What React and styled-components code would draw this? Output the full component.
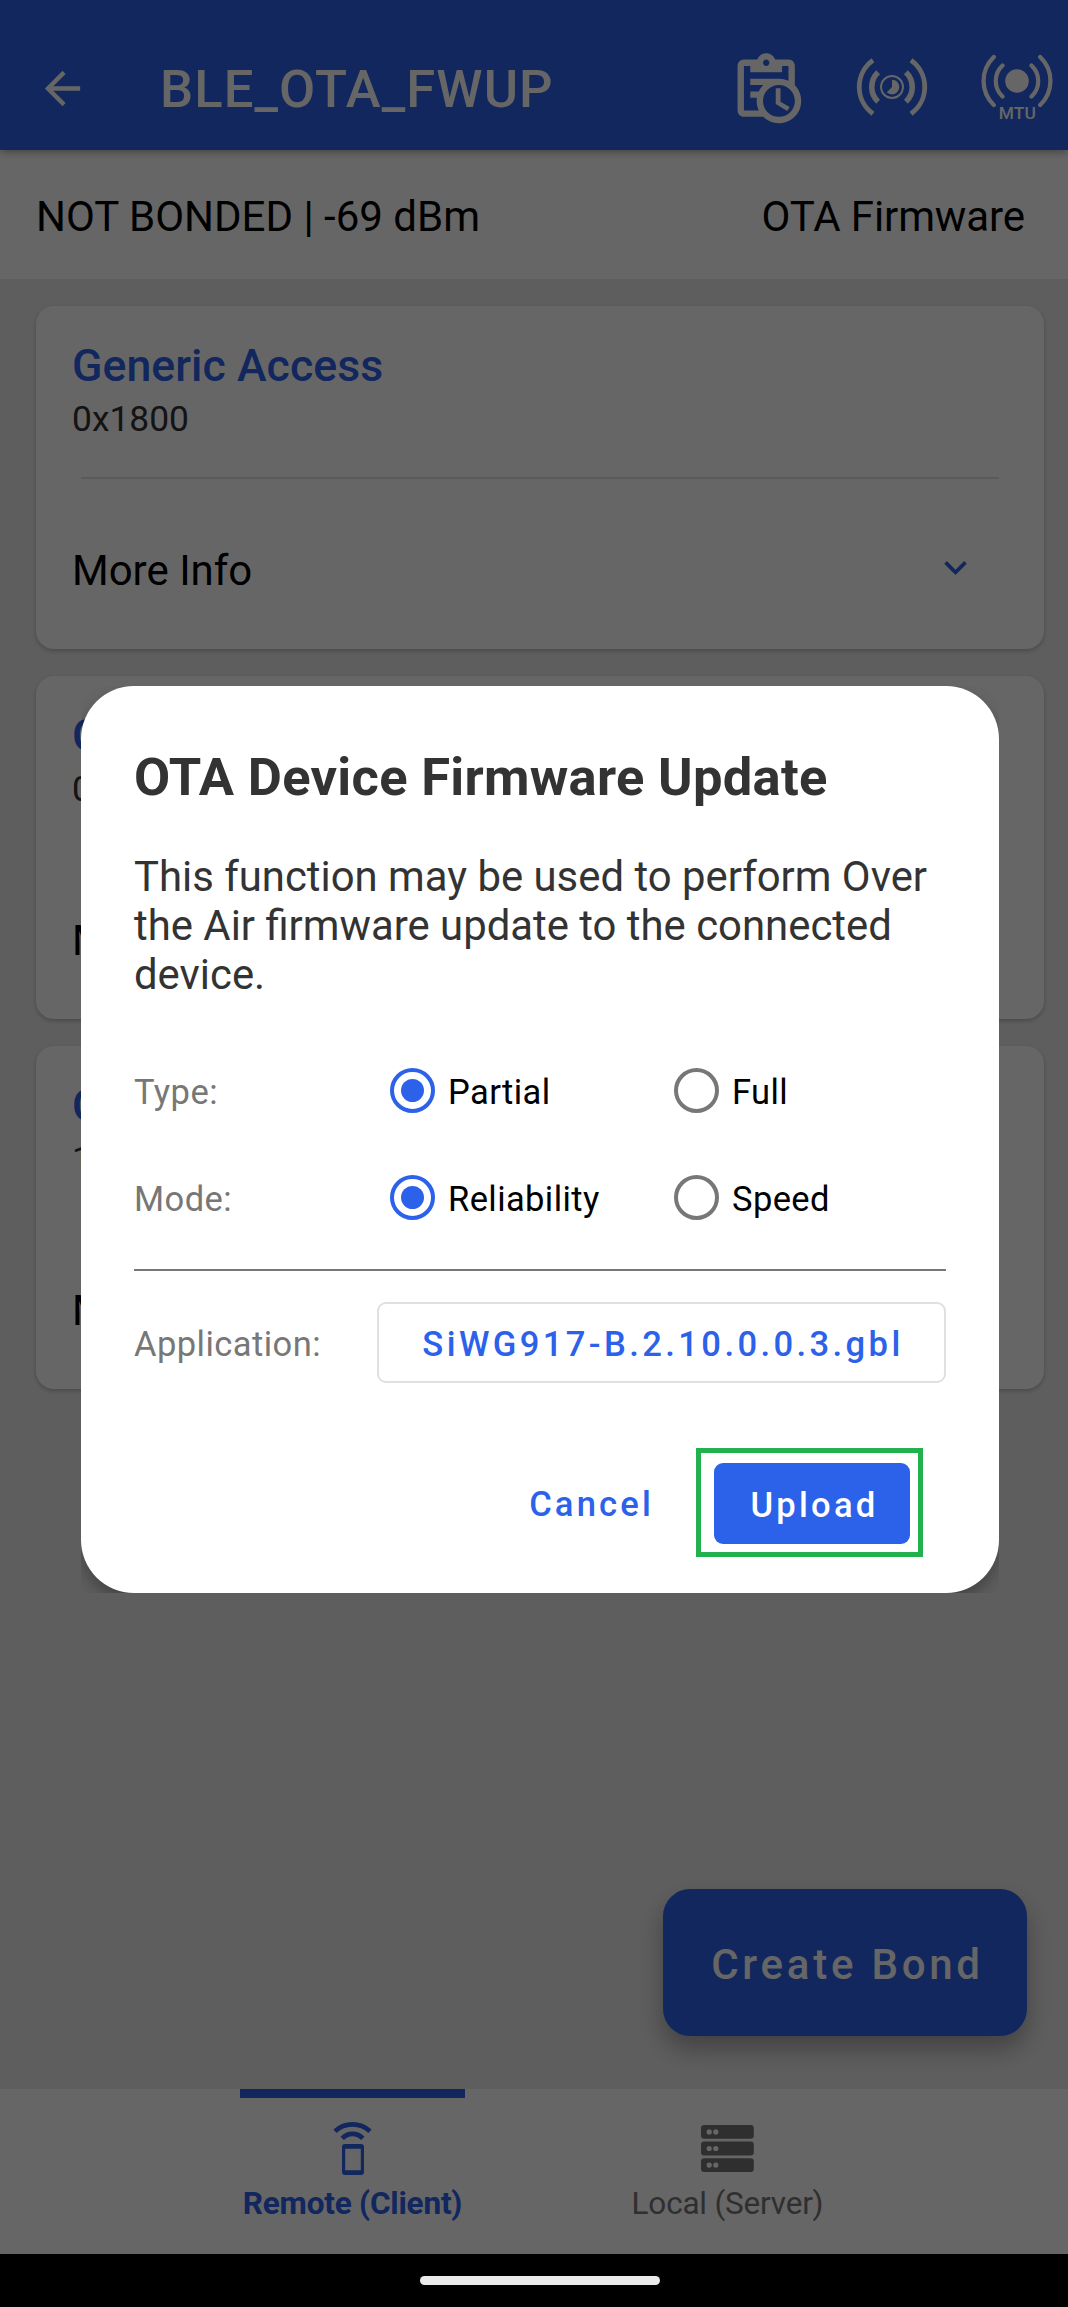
import React from "react";
import styled, { createGlobalStyle } from "styled-components";

const Global = createGlobalStyle`
  *, *::before, *::after { box-sizing: border-box; }
  body { margin: 0; background: #000; }
  body, button { font-family: Roboto, "Liberation Sans", sans-serif; }
  button { border: 0; padding: 0; background: none; }
`;

const Screen = styled.div`
  position: relative;
  width: 1068px;
  height: 2307px;
  display: flex;
  flex-direction: column;
  overflow: hidden;
  background: #ebebeb;
`;

const AppBar = styled.header`
  flex: none;
  height: 150px;
  padding: 26px 14px 0 36px;
  display: flex;
  align-items: center;
  background: #2c61ea;
  color: #fff;
  box-shadow: 0 2px 8px rgba(0, 0, 0, 0.35);
  z-index: 1;
`;

const AppTitle = styled.h1`
  flex: 1;
  margin: 2px 0 0 71px;
  font-size: 52.5px;
  line-height: 62px;
  font-weight: 500;
  letter-spacing: 1.1px;
`;

const Actions = styled.div`
  display: flex;
  align-items: center;
`;

const Action = styled.button`
  width: ${(p) => p.$width}px;
  height: 78px;
  margin-left: ${(p) => p.$gap || 0}px;
  color: inherit;
  svg { display: block; }
`;

const StatusRow = styled.div`
  flex: none;
  height: 129px;
  padding: 3px 43px 0 36px;
  display: flex;
  align-items: center;
  justify-content: space-between;
  background: #fff;
  font-size: 42px;
  line-height: 49px;
  color: #000;
`;

const Mode = styled.span`
  letter-spacing: -0.1px;
`;

const List = styled.main`
  flex: 1;
  padding: 27px 24px 0 36px;
  display: flex;
  flex-direction: column;
  gap: 27px;
`;

const Card = styled.section`
  flex: none;
  height: 343px;
  padding: 34px 45px 0 36px;
  border-radius: 18px;
  background: #fff;
  box-shadow: 0 2px 4px rgba(0, 0, 0, 0.22);
`;

const CardTitle = styled.h2`
  margin: 0;
  font-size: 44.6px;
  line-height: 52px;
  font-weight: 500;
  letter-spacing: 0.06px;
  color: #2c61ea;
`;

const CardCode = styled.div`
  margin-top: 7px;
  font-size: 35.4px;
  line-height: 40px;
  color: #333;
`;

const CardRule = styled.div`
  height: 2px;
  margin: 38px 0 0 9px;
  background: #e0e0e0;
`;

const MoreInfo = styled.div`
  height: 100px;
  margin-top: 41px;
  padding-right: 21px;
  display: flex;
  align-items: center;
  justify-content: space-between;
  font-size: 42px;
  color: #000;
  svg { margin-top: -6px; }
`;

const Fab = styled.button`
  position: absolute;
  left: 663px;
  top: 1889px;
  width: 364px;
  height: 147px;
  padding: 3px 0 0 5px;
  border-radius: 27px;
  background: #2c61ea;
  color: #fff;
  font-size: 42px;
  font-weight: 500;
  letter-spacing: 3.75px;
  box-shadow: 0 13px 24px rgba(0, 0, 0, 0.3);
`;

const Tabs = styled.nav`
  flex: none;
  height: 165px;
  padding: 0 153px 0 165px;
  display: flex;
  background: #fff;
`;

const Tab = styled.div`
  flex: 1;
  display: flex;
  flex-direction: column;
  align-items: center;
  font-size: 31.5px;
  line-height: 38px;
  letter-spacing: -0.2px;
  font-weight: ${(p) => (p.$active ? 700 : 400)};
  color: ${(p) => (p.$active ? "#2c61ea" : "#777")};
  svg { display: block; margin: 20px 0 4px; }
  &::before {
    content: "";
    width: 225px;
    height: 9px;
    background: ${(p) => (p.$active ? "#2c61ea" : "transparent")};
  }
`;

const SystemBar = styled.footer`
  flex: none;
  height: 53px;
  padding-left: 12px;
  display: flex;
  justify-content: center;
  align-items: center;
  background: #000;
`;

const HomeHandle = styled.div`
  width: 240px;
  height: 9px;
  border-radius: 5px;
  background: #ebebeb;
`;

const Scrim = styled.div`
  position: absolute;
  inset: 0 0 53px;
  z-index: 2;
  padding: 686px 69px 0 81px;
  background: rgba(0, 0, 0, 0.6);
`;

const DialogWindow = styled.div`
  height: 907px;
  overflow: hidden;
`;

const Dialog = styled.div`
  height: 907px;
  padding: 60px 53px 0;
  border-radius: 53px;
  background: #fff;
  box-shadow: 0 8px 16px rgba(0, 0, 0, 0.28);
`;

const DialogTitle = styled.h2`
  margin: 0;
  font-size: 52.5px;
  line-height: 62px;
  font-weight: 700;
  letter-spacing: 0.29px;
  color: #333;
`;

const DialogText = styled.p`
  margin: 44px 0 0;
  font-size: 41.87px;
  line-height: 49px;
  color: #333;
`;

const Options = styled.div`
  margin-top: 38px;
`;

const OptionRow = styled.div`
  height: 107px;
  display: grid;
  grid-template-columns: 256px 284px 1fr;
  align-items: center;
`;

const Label = styled.span`
  padding-top: 2px;
  font-size: 34.5px;
  letter-spacing: 0.45px;
  color: #777;
`;

const Choice = styled.label`
  display: flex;
  align-items: center;
  gap: 13px;
  font-size: 34.5px;
  letter-spacing: 0.4px;
  color: #000;
`;

const ChoiceText = styled.span`
  padding-top: 2px;
`;

const Radio = styled.span`
  width: 45px;
  height: 45px;
  display: grid;
  place-items: center;
  border: 4.4px solid ${(p) => (p.$on ? "#2c61ea" : "#777")};
  border-radius: 50%;
  &::after {
    content: "";
    width: 23px;
    height: 23px;
    border-radius: 50%;
    background: ${(p) => (p.$on ? "#2c61ea" : "transparent")};
  }
`;

const Rule = styled.div`
  height: 2px;
  margin-top: 18px;
  background: #777;
`;

const FileRow = styled.div`
  margin-top: 31px;
  display: flex;
  align-items: center;
  justify-content: space-between;
`;

const FileButton = styled.button`
  width: 569px;
  height: 81px;
  padding: 2px 0 0 3px;
  border: 2px solid #e0e0e0;
  border-radius: 9px;
  color: #2c61ea;
  font-size: 34.6px;
  font-weight: 500;
  letter-spacing: 3.4px;
`;

const Buttons = styled.div`
  margin-top: 65px;
  padding-right: 23px;
  display: flex;
  justify-content: flex-end;
  align-items: center;
`;

const CancelButton = styled.button`
  width: 196px;
  height: 81px;
  margin-right: 9px;
  padding: 2px 0 0 5px;
  color: #2c61ea;
  font-size: 34.6px;
  font-weight: 500;
  letter-spacing: 3.15px;
`;

const Highlight = styled.div`
  width: 227px;
  height: 109px;
  padding: 10px 8px 8px 13px;
  border: 5px solid #22b14c;
`;

const UploadButton = styled.button`
  width: 196px;
  height: 81px;
  padding: 2px 0 0 5px;
  border-radius: 9px;
  background: #2c61ea;
  color: #fff;
  font-size: 34.6px;
  font-weight: 500;
  letter-spacing: 3.25px;
`;

const BackIcon = () => (
  <svg width="53" height="53" viewBox="0 0 24 24" fill="currentColor">
    <path d="M20 11H7.83l5.59-5.59L12 4l-8 8 8 8 1.41-1.41L7.83 13H20v-2z" />
  </svg>
);

const LogIcon = () => (
  <svg width="76.4" height="76.4" viewBox="0 0 24 24" fill="currentColor">
    <path d="M21 11.11V5C21 3.9 20.11 3 19 3H14.82C14.4 1.84 13.3 1 12 1S9.6 1.84 9.18 3H5C3.9 3 3 3.9 3 5V19C3 20.11 3.9 21 5 21H11.11C12.37 22.24 14.09 23 16 23C19.87 23 23 19.87 23 16C23 14.09 22.24 12.37 21 11.11M12 3C12.55 3 13 3.45 13 4S12.55 5 12 5 11 4.55 11 4 11.45 3 12 3M5 19V5H7V7H17V5H19V9.68C18.09 9.25 17.08 9 16 9H7V11H11.1C10.5 11.57 10.04 12.25 9.68 13H7V15H9.08C9.03 15.33 9 15.66 9 16C9 17.08 9.25 18.09 9.68 19H5M16 21C13.24 21 11 18.76 11 16S13.24 11 16 11 21 13.24 21 16 18.76 21 16 21M16.5 16.25L19.36 17.94L18.61 19.16L15 17V12H16.5V16.25Z" />
  </svg>
);

const IntervalIcon = () => (
  <svg width="72" height="78" viewBox="-36 -38 72 78" fill="none" stroke="currentColor">
    <path d="M-19 -26.7A32.8 32.8 0 0 0 -19 26.7M19 -26.7A32.8 32.8 0 0 1 19 26.7" strokeWidth="4.8" />
    <path d="M-13.9 -14.7A20.2 20.2 0 0 0 -13.9 14.7M13.9 -14.7A20.2 20.2 0 0 1 13.9 14.7" strokeWidth="5.6" />
    <circle r="11" strokeWidth="1.9" />
    <path d="M0 -7.3A7.3 7.3 0 1 1 -5.2 5.2L0 0Z" fill="currentColor" stroke="none" />
  </svg>
);

const MtuIcon = () => (
  <svg width="74" height="78" viewBox="-37 -32 74 78" fill="none" stroke="currentColor" strokeLinecap="round">
    <path d="M-23.2 -24A33.3 33.3 0 0 0 -23.2 24M23.2 -24A33.3 33.3 0 0 1 23.2 24" strokeWidth="4.3" />
    <path d="M-14.5 -15.5A21.2 21.2 0 0 0 -14.5 15.5M14.5 -15.5A21.2 21.2 0 0 1 14.5 15.5" strokeWidth="4.2" />
    <circle r="11.8" fill="currentColor" stroke="none" />
    <text x="0.3" y="38" textAnchor="middle" fontSize="17.4" fontWeight="500" fill="currentColor" stroke="none">MTU</text>
  </svg>
);

const ChevronIcon = () => (
  <svg width="45" height="45" viewBox="0 0 24 24" fill="#2c61ea">
    <path d="M7.41 8.59L12 13.17l4.59-4.58L18 10l-6 6-6-6 1.41-1.41z" />
  </svg>
);

const RemoteIcon = () => (
  <svg width="63" height="63" viewBox="0 0 63 63" fill="none" stroke="currentColor">
    <path d="M14 13.2A25.9 25.9 0 0 1 49 13.2" strokeWidth="4.7" />
    <path d="M21.2 20.4A13.8 13.8 0 0 1 41.8 20.4" strokeWidth="4.7" />
    <path
      d="M24 26h16a3 3 0 0 1 3 3v25a3 3 0 0 1 -3 3h-16a3 3 0 0 1 -3 -3v-25a3 3 0 0 1 3 -3zM24.2 30.8v21.4h15.6v-21.4z"
      fill="currentColor"
      fillRule="evenodd"
      stroke="none"
    />
  </svg>
);

const ServerIcon = () => (
  <svg width="63" height="63" viewBox="0 0 63 63" fill="currentColor">
    {[7, 23.6, 40.2].map((y) => (
      <g key={y}>
        <rect x="5" y={y} width="52.8" height="13.8" rx="3.2" />
        <circle cx="13.2" cy={y + 6.9} r="2.6" fill="#fff" />
        <circle cx="19.8" cy={y + 6.9} r="2.6" fill="#fff" />
      </g>
    ))}
  </svg>
);

const services = [
  { name: "Generic Access", code: "0x1800" },
  { name: "Generic Attribute", code: "0x1801" },
  { name: "OTA Service", code: "1D14D6EE-FD63" },
];

const options = [
  { label: "Type:", choices: ["Partial", "Full"] },
  { label: "Mode:", choices: ["Reliability", "Speed"] },
];

export default function App() {
  return (
    <>
      <Global />
      <Screen>
        <AppBar>
          <BackIcon />
          <AppTitle>BLE_OTA_FWUP</AppTitle>
          <Actions>
            <Action $width={77}><LogIcon /></Action>
            <Action $width={72} $gap={51}><IntervalIcon /></Action>
            <Action $width={74} $gap={52}><MtuIcon /></Action>
          </Actions>
        </AppBar>
        <StatusRow>
          <span>NOT BONDED | -69 dBm</span>
          <Mode>OTA Firmware</Mode>
        </StatusRow>
        <List>
          {services.map((s) => (
            <Card key={s.name}>
              <CardTitle>{s.name}</CardTitle>
              <CardCode>{s.code}</CardCode>
              <CardRule />
              <MoreInfo>
                More Info
                <ChevronIcon />
              </MoreInfo>
            </Card>
          ))}
        </List>
        <Fab>Create Bond</Fab>
        <Tabs>
          <Tab $active>
            <RemoteIcon />
            Remote (Client)
          </Tab>
          <Tab>
            <ServerIcon />
            Local (Server)
          </Tab>
        </Tabs>
        <SystemBar>
          <HomeHandle />
        </SystemBar>
        <Scrim>
          <DialogWindow>
            <Dialog>
              <DialogTitle>OTA Device Firmware Update</DialogTitle>
              <DialogText>
                This function may be used to perform Over the Air firmware update to the connected device.
              </DialogText>
              <Options>
                {options.map((o) => (
                  <OptionRow key={o.label}>
                    <Label>{o.label}</Label>
                    {o.choices.map((c, i) => (
                      <Choice key={c}>
                        <Radio $on={i === 0} />
                        <ChoiceText>{c}</ChoiceText>
                      </Choice>
                    ))}
                  </OptionRow>
                ))}
              </Options>
              <Rule />
              <FileRow>
                <Label>Application:</Label>
                <FileButton>SiWG917-B.2.10.0.0.3.gbl</FileButton>
              </FileRow>
              <Buttons>
                <CancelButton>Cancel</CancelButton>
                <Highlight>
                  <UploadButton>Upload</UploadButton>
                </Highlight>
              </Buttons>
            </Dialog>
          </DialogWindow>
        </Scrim>
      </Screen>
    </>
  );
}
